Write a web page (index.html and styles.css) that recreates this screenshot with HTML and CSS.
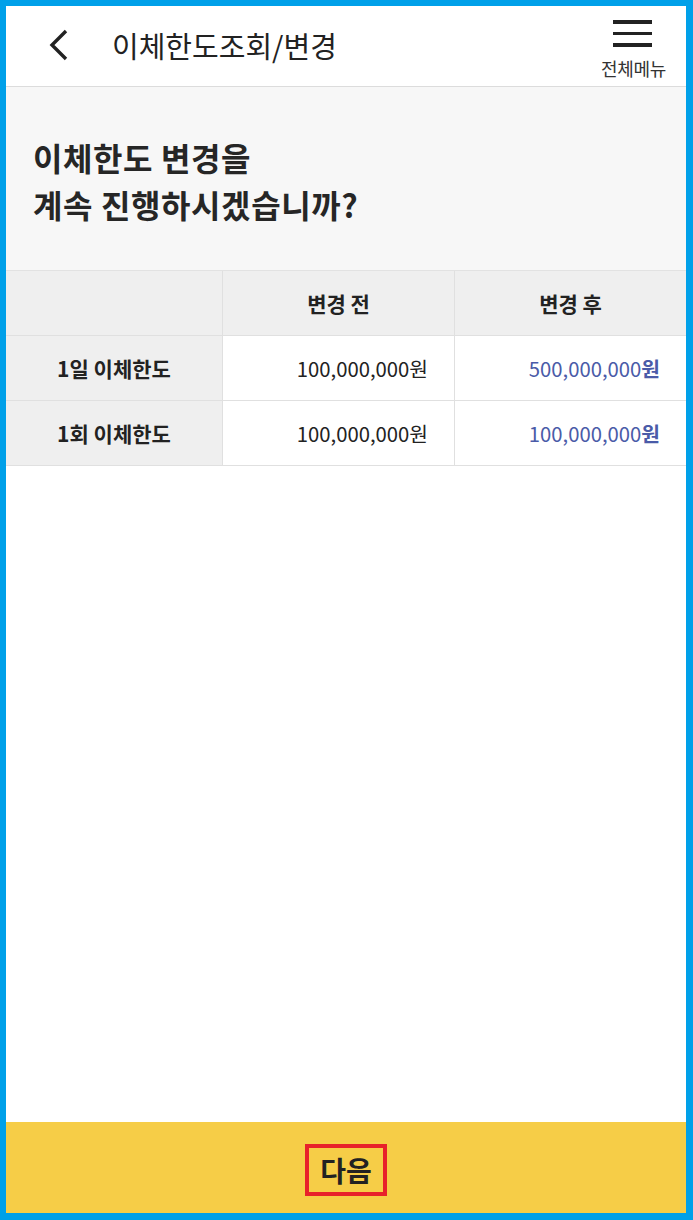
FILE: index.html
```html
<!DOCTYPE HTML>
<html>
<head>
<title>이체한도조회/변경</title>
<link rel="stylesheet" href="styles.css">
</head>
<body>
<div class="frame">
  <div class="top">
    <a class="back" href="#"><svg width="24" height="34" viewBox="0 0 24 34"><path d="M20 3 L6 17 L20 31" fill="none" stroke="#222" stroke-width="3.4"/></svg></a>
    <h1>이체한도조회/변경</h1>
    <a class="menu" href="#">
      <span class="bars"><i></i><i></i><i></i></span>
      <span class="menutxt">전체메뉴</span>
    </a>
  </div>

  <div class="ask">
    <h2>이체한도 변경을<br>계속 진행하시겠습니까?</h2>
  </div>

  <table class="limits">
    <tr><th></th><th>변경 전</th><th>변경 후</th></tr>
    <tr><th>1일 이체한도</th><td>100,000,000원</td><td class="after">500,000,000<b>원</b></td></tr>
    <tr><th>1회 이체한도</th><td>100,000,000원</td><td class="after">100,000,000<b>원</b></td></tr>
  </table>

  <div class="space"></div>

  <div class="bottom">
    <a class="next" href="#">다음</a>
  </div>
</div>
</body>
</html>
```

FILE: styles.css
```css
html, body { margin: 0; padding: 0; }
body { font-family: "Noto Sans CJK KR", "Noto Sans", sans-serif; color: #222; background: #fff; }

.frame { box-sizing: border-box; width: 693px; height: 1220px; border: solid #00a0e9; border-width: 6px 7px 7px 6px;
         display: flex; flex-direction: column; background: #fff; }

.top { height: 80px; border-bottom: 1px solid #dcdcdc; display: flex; align-items: center; position: relative; flex: none; }
.top .back { display: block; margin-left: 40px; width: 24px; height: 34px; margin-top: -2px; }
.top h1 { margin: 0 0 0 42px; font-size: 29px; font-weight: 400; letter-spacing: 0; line-height: 1; margin-top: -2px; }
.top .menu { margin-left: auto; margin-right: 20px; display: flex; flex-direction: column; align-items: center; text-decoration: none; color: #333; align-self: flex-start; padding-top: 14px; }
.bars { display: flex; flex-direction: column; gap: 8px; width: 39px; margin-left: -2px; }
.bars i { display: block; height: 3.5px; background: #222; }
.menutxt { font-size: 18px; margin-top: 12px; letter-spacing: -0.3px; line-height: 1; }

.ask { background: #f7f7f7; height: 184px; border-bottom: 1px solid #e2e2e2; flex: none; box-sizing: border-box; padding: 47px 0 0 27px; }
.ask h2 { margin: 0; font-size: 32px; font-weight: 700; line-height: 47px; letter-spacing: 0.6px; color: #262626; }

.limits { width: 100%; border-collapse: collapse; border-spacing: 0; flex: none; }
.limits th, .limits td { border: 1px solid #e0e0e0; height: 64px; padding: 0; font-size: 20px; letter-spacing: 0; }
.limits tr:first-child th { border-top: none; }
.limits tr > :first-child { border-left: none; }
.limits tr > :last-child { border-right: none; }
.limits th { background: #efefef; font-weight: 700; color: #222; font-size: 21px; }
.limits tr > th:first-child { width: 216px; }
.limits tr:first-child th:nth-child(2) { width: 231px; }
.limits td { text-align: right; padding-right: 26px; color: #222; font-weight: 400; font-size: 20.3px; }
.limits td.after { color: #4a5ba8; }
.limits td.after b { font-weight: 700; }

.space { flex: 1; }

.bottom { height: 91px; background: #f6cd47; display: flex; justify-content: center; align-items: center; flex: none; }
.next { box-sizing: border-box; width: 82px; height: 52px; border: 4px solid #e8212a; display: flex; justify-content: center; align-items: center;
        font-size: 28px; font-weight: 700; color: #222; text-decoration: none; margin-top: 4px; }
```
